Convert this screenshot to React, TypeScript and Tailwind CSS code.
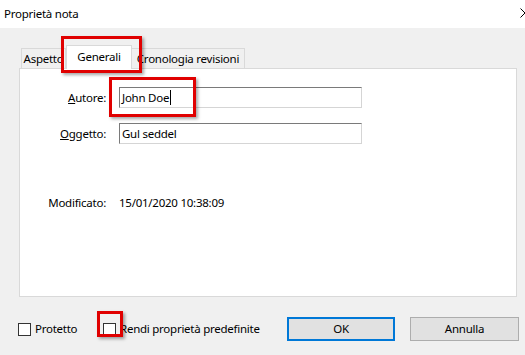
import * as React from "react";

function Checkbox({ label }: { label: string }) {
  return (
    <label className="flex items-center">
      <span className="h-[13px] w-[13px] border border-[#333333] bg-white" />
      <span className="ml-[4px]">{label}</span>
    </label>
  );
}

function Field({ access, rest, value, caret }: { access?: string; rest: string; value: string; caret?: boolean }) {
  return (
    <div className="flex items-center">
      <div className="w-[86px] text-right">
        {access ? <span className="underline">{access}</span> : null}
        {rest}
      </div>
      <div className="ml-[13px] flex h-[21px] w-[243px] items-center border-t border-l border-r border-b border-[#7a7a7a] border-r-[#d5d5d5] border-b-[#d5d5d5] bg-white pl-[2px]">
        <span>{value}</span>
        {caret ? <span className="ml-px h-[15px] w-px bg-black" /> : null}
      </div>
    </div>
  );
}

export default function App() {
  return (
    <div className="relative h-[355px] w-[525px] overflow-hidden bg-[#f0f0f0] font-['Segoe_UI','Noto_Sans',sans-serif] text-[11.5px] tracking-[-0.25px] text-black">
      {/* title bar */}
      <div className="flex h-[28px] items-center bg-white pb-px pl-[4px]">
        <span>Proprietà nota</span>
        <svg className="ml-auto mr-[-5px] mb-[2px]" width="10" height="10" viewBox="0 0 10 10">
          <path d="M0.5 0.5 L9.5 9.5 M9.5 0.5 L0.5 9.5" stroke="#000" strokeWidth="1" />
        </svg>
      </div>

      <div className="pl-[19px] pr-[8px] pt-[17px]">
        {/* tabs */}
        <div className="flex h-[23px] items-end pl-[2px]">
          <div className="flex h-[20px] w-[45px] items-center justify-center border border-b-0 border-[#d9d9d9] bg-[#f0f0f0]">
            Aspetto
          </div>
          <div className="relative z-10 -mb-px flex h-[24px] w-[66px] items-start justify-center border border-b-0 border-[#d9d9d9] bg-white pt-[2px]">
            Generali
          </div>
          <div className="flex h-[20px] w-[113px] items-center justify-center border border-b-0 border-l-0 border-[#d9d9d9] bg-[#f0f0f0]">
            Cronologia revisioni
          </div>
        </div>

        {/* panel */}
        <div className="flex h-[229px] flex-col border border-[#d9d9d9] bg-white pt-[18px]">
          <Field access="A" rest="utore:" value="John Doe" caret />
          <div className="mt-[15px]">
            <Field access="O" rest="ggetto:" value="Gul seddel" />
          </div>
          <div className="mt-[48px] flex h-[21px] items-center">
            <div className="w-[86px] text-right">Modificato:</div>
            <div className="ml-[13px]">15/01/2020 10:38:09</div>
          </div>
        </div>

        {/* bottom row */}
        <div className="mt-[20px] flex h-[24px] items-center">
          <div className="ml-[-1px] w-[85px]">
            <Checkbox label="Protetto" />
          </div>
          <Checkbox label="Rendi proprietà predefinite" />
          <button className="ml-auto h-[24px] w-[108px] border-2 border-[#0078d7] bg-[#e1e1e1]">OK</button>
          <button className="mr-[-2px] ml-[15px] h-[24px] w-[109px] border border-[#adadad] bg-[#e1e1e1]">Annulla</button>
        </div>
      </div>

      {/* red highlight overlays */}
      <div className="absolute left-[61px] top-[36px] h-[37px] w-[81px] border-[3px] border-[#e00000] shadow-[2px_2px_3px_rgba(0,0,0,0.35)]" />
      <div className="absolute left-[109px] top-[77px] h-[40px] w-[87px] border-[3px] border-[#e00000] shadow-[2px_2px_3px_rgba(0,0,0,0.35)]" />
      <div className="absolute left-[97px] top-[311px] h-[26px] w-[26px] border-[3px] border-[#e00000] shadow-[2px_2px_3px_rgba(0,0,0,0.35)]" />
    </div>
  );
}
